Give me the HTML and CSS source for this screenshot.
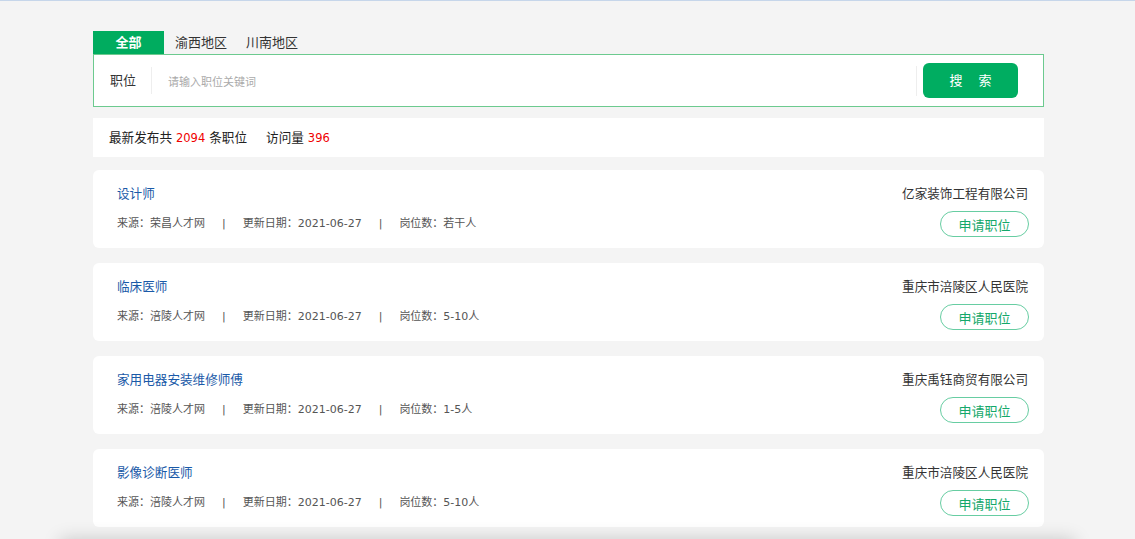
FILE: index.html
```html
<!DOCTYPE html>
<html lang="zh-CN">
<head>
    <meta charset="UTF-8">
    <meta name="viewport" content="width=device-width, initial-scale=1.0">
    <title>招聘信息</title>
    <link rel="stylesheet" href="styles.css">
</head>
<body>
    <div class="page">
        <div class="tabs">
            <span class="tab active">全部</span>
            <span class="tab">渝西地区</span>
            <span class="tab">川南地区</span>
        </div>
        <div class="search">
            <span class="search-label">职位</span>
            <input type="text" class="search-input" placeholder="请输入职位关键词" />
            <button class="search-button">搜 索</button>
        </div>
        <div class="stats">
            最新发布共 <span class="num">2094</span> 条职位
            <span class="visits">访问量 <span class="num">396</span></span>
        </div>

        <div class="job">
            <div class="job-left">
                <div class="job-title">设计师</div>
                <div class="job-meta">
                    <span>来源：荣昌人才网</span><span class="sep">|</span><span>更新日期：2021-06-27</span><span class="sep">|</span><span>岗位数：若干人</span>
                </div>
            </div>
            <div class="job-right">
                <div class="company">亿家装饰工程有限公司</div>
                <button class="apply">申请职位</button>
            </div>
        </div>

        <div class="job">
            <div class="job-left">
                <div class="job-title">临床医师</div>
                <div class="job-meta">
                    <span>来源：涪陵人才网</span><span class="sep">|</span><span>更新日期：2021-06-27</span><span class="sep">|</span><span>岗位数：5-10人</span>
                </div>
            </div>
            <div class="job-right">
                <div class="company">重庆市涪陵区人民医院</div>
                <button class="apply">申请职位</button>
            </div>
        </div>

        <div class="job">
            <div class="job-left">
                <div class="job-title">家用电器安装维修师傅</div>
                <div class="job-meta">
                    <span>来源：涪陵人才网</span><span class="sep">|</span><span>更新日期：2021-06-27</span><span class="sep">|</span><span>岗位数：1-5人</span>
                </div>
            </div>
            <div class="job-right">
                <div class="company">重庆禹钰商贸有限公司</div>
                <button class="apply">申请职位</button>
            </div>
        </div>

        <div class="job">
            <div class="job-left">
                <div class="job-title">影像诊断医师</div>
                <div class="job-meta">
                    <span>来源：涪陵人才网</span><span class="sep">|</span><span>更新日期：2021-06-27</span><span class="sep">|</span><span>岗位数：5-10人</span>
                </div>
            </div>
            <div class="job-right">
                <div class="company">重庆市涪陵区人民医院</div>
                <button class="apply">申请职位</button>
            </div>
        </div>
    </div>
    <div class="bottom-bar"></div>
</body>
</html>
```

FILE: styles.css
```css
body {
    margin: 0;
    padding: 0;
    background-color: #f4f4f4;
    border-top: 1px solid #c6d6ea;
    font-family: "DejaVu Sans", "Noto Sans CJK SC", sans-serif;
    color: #333;
    overflow: hidden;
}

.page {
    width: 951px;
    margin: 0 0 0 93px;
    padding-top: 30px;
}

.tabs {
    display: flex;
    height: 23px;
    align-items: center;
}

.tab {
    padding: 0 10px;
    font-size: 13px;
    line-height: 23px;
    color: #333;
}

.tab.active {
    width: 71px;
    padding: 0;
    text-align: center;
    background-color: #00ac5f;
    color: white;
    font-weight: bold;
    margin-right: 1px;
}

.tab:last-child {
    padding-left: 9px;
}

.search {
    display: flex;
    align-items: center;
    height: 51px;
    padding: 0 25px 0 16px;
    background-color: white;
    border: 1px solid #6cca8f;
}

.search-label {
    font-size: 13px;
    padding-right: 15px;
    border-right: 1px solid #eee;
    line-height: 27px;
}

.search-input {
    flex: 1;
    border: none;
    outline: none;
    height: 27px;
    padding: 3px 16px 0;
    font-size: 11px;
    font-family: inherit;
    border-right: 1px solid #eee;
    margin-right: 6px;
}

.search-input::placeholder {
    color: #aaa;
}

.search-button {
    width: 95px;
    height: 35px;
    border: none;
    border-radius: 6px;
    background-color: #00ad61;
    color: white;
    font-size: 13px;
    font-family: inherit;
    letter-spacing: 6px;
    padding: 0 0 3px 6px;
}

.stats {
    margin-top: 11px;
    height: 39px;
    line-height: 39px;
    padding-left: 16px;
    background-color: white;
    font-size: 12.6px;
    color: #222;
}

.stats .num {
    font-size: 11.5px;
    color: #f00000;
}

.visits {
    margin-left: 15px;
}

.job {
    display: flex;
    justify-content: space-between;
    margin-top: 13px;
    padding: 15px 16px 11px 24px;
    background-color: white;
    border-radius: 6px;
}

.job + .job {
    margin-top: 15px;
}

.job-title {
    font-size: 12.6px;
    line-height: 18px;
    color: #1a5aa8;
}

.job-meta {
    margin-top: 13px;
    font-size: 11px;
    line-height: 16px;
    color: #555;
}

.sep {
    margin: 0 17px 0 17px;
}

.job-right {
    display: flex;
    flex-direction: column;
    align-items: flex-end;
}

.company {
    font-size: 12.6px;
    line-height: 18px;
    color: #333;
}

.apply {
    margin-top: 8px;
    width: 89px;
    height: 26px;
    border: 1px solid #67cda2;
    border-radius: 13px;
    background-color: white;
    color: #14a86a;
    font-size: 13px;
    font-family: inherit;
    margin-right: -1px;
}

.bottom-bar {
    position: fixed;
    left: 60px;
    right: 60px;
    bottom: -40px;
    height: 40px;
    background-color: #f4f4f4;
    box-shadow: 0 0 18px rgba(0, 0, 0, 0.18);
}
```
